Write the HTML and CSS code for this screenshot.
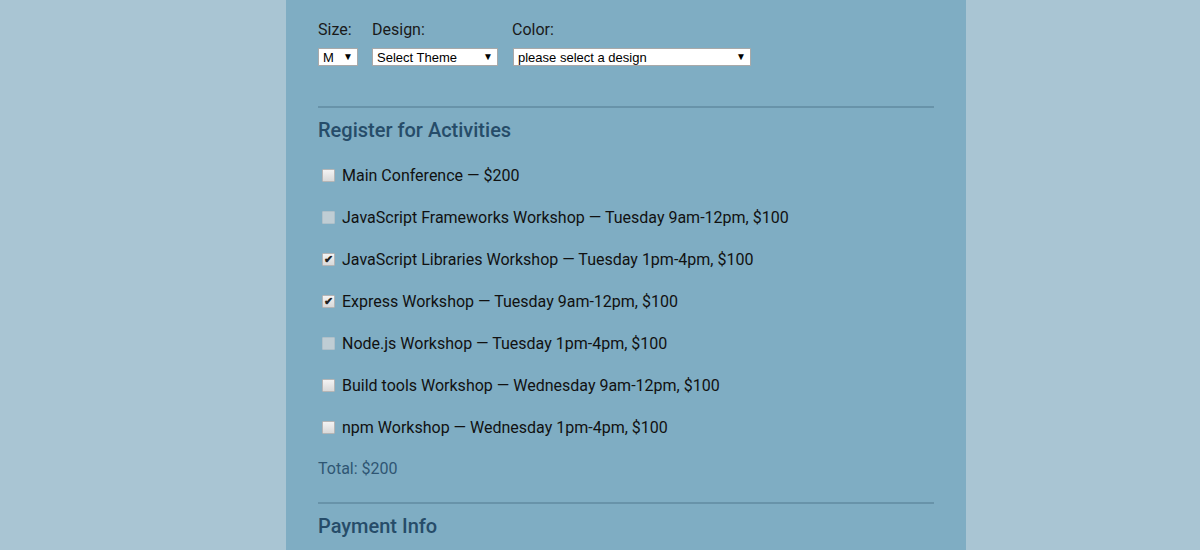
FILE: index.html
```html
<!DOCTYPE html>
<html>
<head>
<meta charset="utf-8">
<link rel="stylesheet" href="styles.css">
</head>
<body>
<div class="container">
  <div class="shirt-row">
    <div class="field">
      <label class="field-label">Size:</label>
      <span class="select sel-size"><span class="sel-text">M</span><span class="arrow">▼</span></span>
    </div>
    <div class="field">
      <label class="field-label">Design:</label>
      <span class="select sel-design"><span class="sel-text">Select Theme</span><span class="arrow">▼</span></span>
    </div>
    <div class="field">
      <label class="field-label">Color:</label>
      <span class="select sel-color"><span class="sel-text">please select a design</span><span class="arrow">▼</span></span>
    </div>
  </div>
  <hr class="rule rule-first">
  <h2 class="legend">Register for Activities</h2>
  <ul class="activities">
    <li class="activity"><span class="box"></span>Main Conference — $200</li>
    <li class="activity"><span class="box disabled"></span>JavaScript Frameworks Workshop — Tuesday 9am-12pm, $100</li>
    <li class="activity"><span class="box checked">✔</span>JavaScript Libraries Workshop — Tuesday 1pm-4pm, $100</li>
    <li class="activity"><span class="box checked">✔</span>Express Workshop — Tuesday 9am-12pm, $100</li>
    <li class="activity"><span class="box disabled"></span>Node.js Workshop — Tuesday 1pm-4pm, $100</li>
    <li class="activity"><span class="box"></span>Build tools Workshop — Wednesday 9am-12pm, $100</li>
    <li class="activity"><span class="box"></span>npm Workshop — Wednesday 1pm-4pm, $100</li>
  </ul>
  <div class="total">Total: $200</div>
  <hr class="rule rule-second">
  <h2 class="legend">Payment Info</h2>
</div>
</body>
</html>
```
FILE: styles.css
```css
html, body {
  margin: 0;
  padding: 0;
  height: 100%;
}
body {
  background: #a9c5d3;
  font-family: Roboto, "Liberation Sans", Arial, sans-serif;
  overflow: hidden;
}
.container {
  width: 616px;
  margin: 0 0 0 calc(50% - 314px);
  padding: 20px 32px 0;
  background: #7fadc3;
  min-height: 100%;
}
.shirt-row {
  display: flex;
  gap: 14px;
}
.field {
  display: flex;
  flex-direction: column;
  gap: 8px;
}
.field-label {
  font-size: 16px;
  line-height: 20px;
  color: #1a1a1a;
}
.select {
  display: flex;
  align-items: center;
  justify-content: space-between;
  height: 18px;
  box-sizing: border-box;
  background: #fff;
  border: 1px solid #a9a9a9;
  font-family: Arial, "Liberation Sans", sans-serif;
  font-size: 13px;
  color: #000;
  padding: 0 4px 0 4px;
}
.sel-size { width: 40px; }
.sel-design { width: 126px; }
.sel-color { width: 238px; margin-left: 1px; }
.arrow {
  font-size: 10px;
  line-height: 1;
}
.rule {
  border: 0;
  height: 2px;
  background: #6893a9;
  margin: 0;
}
.rule-first { margin-top: 40px; }
.rule-second { margin-top: 21px; }
.legend {
  margin: 10px 0 0;
  font-size: 20px;
  line-height: 24px;
  font-weight: 500;
  color: #264c69;
}
.activities {
  list-style: none;
  margin: 22px 0 0;
  padding: 0;
  display: flex;
  flex-direction: column;
  gap: 18px;
}
.activity {
  display: flex;
  align-items: center;
  font-size: 16px;
  line-height: 24px;
  color: #111;
}
.box {
  width: 13px;
  height: 13px;
  box-sizing: border-box;
  margin: -1px 7px 0 4px;
  border: 1px solid #b5b5b5;
  border-radius: 1px;
  background: linear-gradient(#f3f3f3, #d9d9d9);
  display: flex;
  align-items: center;
  justify-content: center;
  font-size: 11px;
  font-weight: bold;
  line-height: 1;
  color: #222;
}
.box.disabled {
  background: #bfcdd4;
  border-color: #afc0c9;
}
.total {
  margin-top: 17px;
  font-size: 16px;
  line-height: 24px;
  color: #2f5673;
}
```
